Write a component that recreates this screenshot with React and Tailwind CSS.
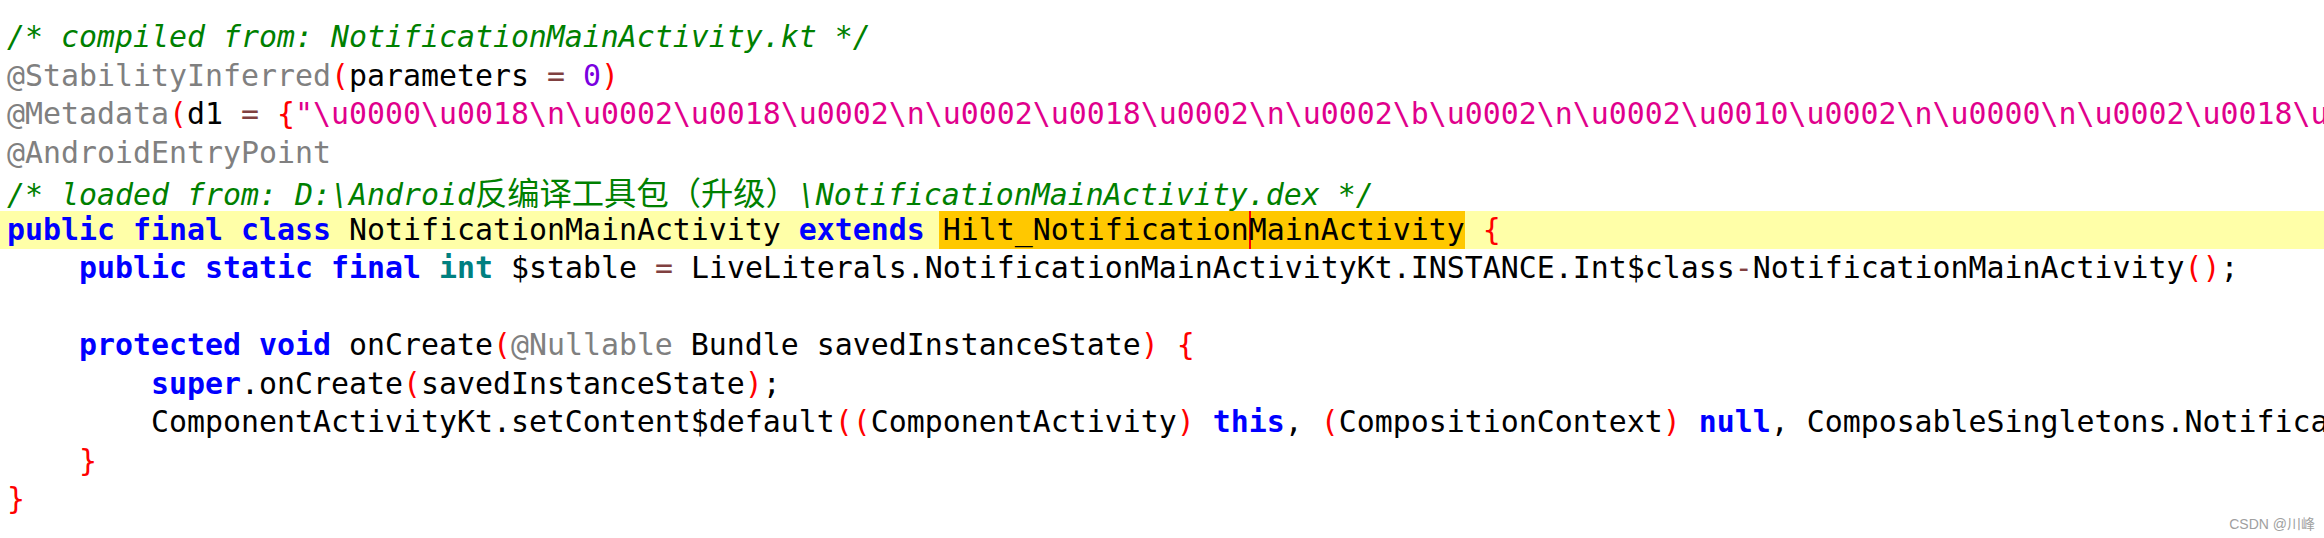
import React from 'react'

// token colours, roughly what the decompiler view uses
const C = {
  comment: 'text-[#008000] italic',
  anno: 'text-[#808080]',
  paren: 'text-[#ff0000]',
  op: 'text-[#804040]',
  num: 'text-[#7a00e0]',
  str: 'text-[#e0008c]',
  kw: 'text-[#0000ff] font-bold',
  type: 'text-[#008080] font-bold',
  txt: 'text-black',
}

const META = String.raw`"\u0000\u0018\n\u0002\u0018\u0002\n\u0002\u0018\u0002\n\u0002\b\u0002\n\u0002\u0010\u0002\n\u0000\n\u0002\u0018\u`

const T = ({ c = 'txt', children }) => <span className={C[c]}>{children}</span>

const Line = ({ children, active }) => (
  <div className={`h-[38.5px] leading-[38.5px] whitespace-pre pl-[7px] ${active ? 'bg-[#ffffa8]' : ''}`}>
    {children}
  </div>
)

const App = () => {
  return (
    <div
      className="relative w-[2324px] h-[538px] overflow-hidden bg-white pt-[18px] text-[29.9px] text-black"
      style={{ fontFamily: '"DejaVu Sans Mono", "Liberation Mono", "Noto Sans CJK SC", monospace' }}
    >
      <Line><T c="comment">/* compiled from: NotificationMainActivity.kt */</T></Line>
      <Line>
        <T c="anno">@StabilityInferred</T><T c="paren">(</T>parameters <T c="op">=</T> <T c="num">0</T><T c="paren">)</T>
      </Line>
      <Line>
        <T c="anno">@Metadata</T><T c="paren">(</T>d1 <T c="op">=</T> <T c="paren">{'{'}</T><T c="str">{META}</T>
      </Line>
      <Line><T c="anno">@AndroidEntryPoint</T></Line>
      <Line>
        <T c="comment">{String.raw`/* loaded from: D:\Android`}</T>
        <span className="text-[#008000] text-[32.3px]" style={{ fontFamily: '"Noto Sans CJK SC", sans-serif' }}>反编译工具包（升级）</span>
        <T c="comment">{String.raw`\NotificationMainActivity.dex */`}</T>
      </Line>
      <Line active>
        <T c="kw">public</T> <T c="kw">final</T> <T c="kw">class</T> NotificationMainActivity <T c="kw">extends</T>{' '}
        <span className="inline-block bg-[#ffc800] ml-[-4px] pl-[4px]">Hilt_Notification</span>
        <span className="inline-block bg-[#ffc800] shadow-[inset_2px_0_0_#ff0000]">MainActivity</span>
        {' '}<T c="paren">{'{'}</T>
      </Line>
      <Line>
        {'    '}<T c="kw">public</T> <T c="kw">static</T> <T c="kw">final</T> <T c="type">int</T> $stable <T c="op">=</T> LiveLiterals.NotificationMainActivityKt.INSTANCE.Int$class<T c="op">-</T>NotificationMainActivity<T c="paren">()</T>;
      </Line>
      <Line>{' '}</Line>
      <Line>
        {'    '}<T c="kw">protected</T> <T c="kw">void</T> onCreate<T c="paren">(</T><T c="anno">@Nullable</T> Bundle savedInstanceState<T c="paren">)</T> <T c="paren">{'{'}</T>
      </Line>
      <Line>
        {'        '}<T c="kw">super</T>.onCreate<T c="paren">(</T>savedInstanceState<T c="paren">)</T>;
      </Line>
      <Line>
        {'        '}ComponentActivityKt.setContent$default<T c="paren">((</T>ComponentActivity<T c="paren">)</T> <T c="kw">this</T>, <T c="paren">(</T>CompositionContext<T c="paren">)</T> <T c="kw">null</T>, ComposableSingletons.Notifica
      </Line>
      <Line>{'    '}<T c="paren">{'}'}</T></Line>
      <Line><T c="paren">{'}'}</T></Line>

      <div
        className="absolute right-[9px] bottom-[7px] text-[14px] leading-none text-[#a0a0a0]"
        style={{ fontFamily: '"Liberation Sans", "Noto Sans CJK SC", sans-serif' }}
      >
        CSDN @川峰
      </div>
    </div>
  )
}

export default App
